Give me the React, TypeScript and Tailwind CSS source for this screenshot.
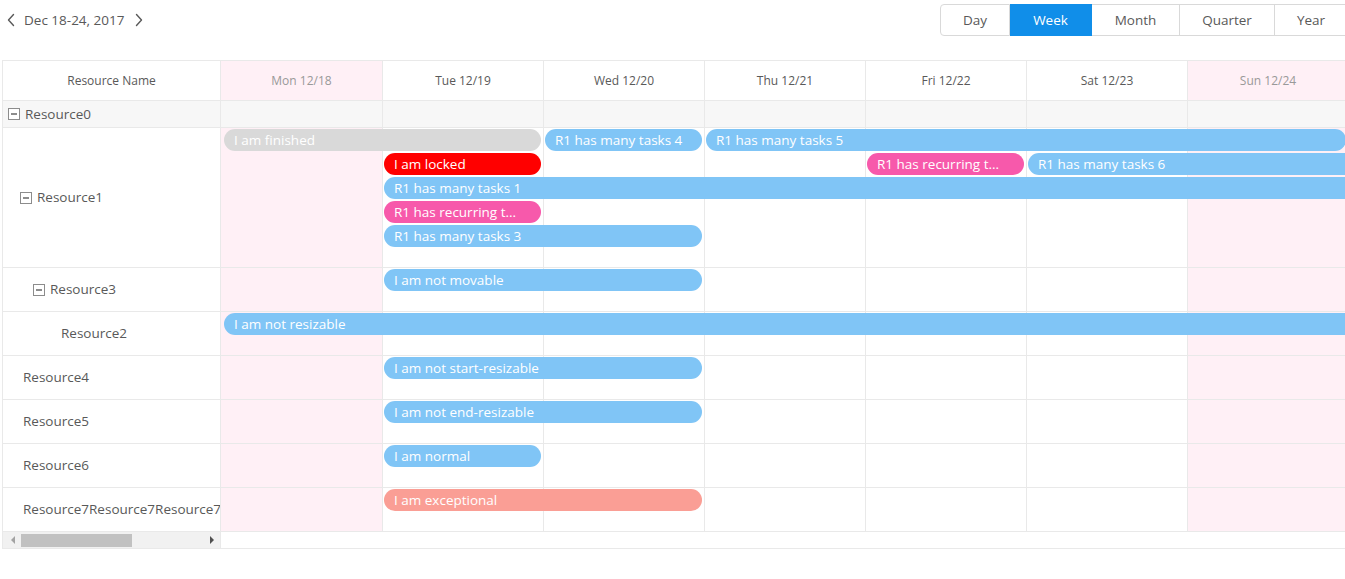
import React from 'react'

/* ── Scheduler data (week of Dec 18, 2017) ── */
const DAYS = [
  { label: 'Mon 12/18', off: true },
  { label: 'Tue 12/19', off: false },
  { label: 'Wed 12/20', off: false },
  { label: 'Thu 12/21', off: false },
  { label: 'Fri 12/22', off: false },
  { label: 'Sat 12/23', off: false },
  { label: 'Sun 12/24', off: true },
]

const VIEWS = [
  { label: 'Day', w: 'w-[70px]' },
  { label: 'Week', w: 'w-[82px]', active: true },
  { label: 'Month', w: 'w-[88px]' },
  { label: 'Quarter', w: 'w-[95px]' },
  { label: 'Year', w: 'w-[73px]' },
]

const COL_START = ['col-start-1', 'col-start-2', 'col-start-3', 'col-start-4', 'col-start-5', 'col-start-6', 'col-start-7']
const COL_END = ['col-end-2', 'col-end-3', 'col-end-4', 'col-end-5', 'col-end-6', 'col-end-7', 'col-end-8']
const ROW_START = ['row-start-2', 'row-start-3', 'row-start-4', 'row-start-5', 'row-start-6']

type Ev = {
  text: string
  lane: number
  start: number
  end: number
  bg: string
  cut?: boolean
}

type Res = {
  name: string
  height: string
  rows: string
  pad: string
  icon?: boolean
  group?: boolean
  events: Ev[]
}

const BLUE = 'bg-[#80c5f6]'

const RESOURCES: Res[] = [
  { name: 'Resource0', height: 'h-[27px]', rows: 'grid-rows-[1fr]', pad: 'pl-[5px]', icon: true, group: true, events: [] },
  {
    name: 'Resource1',
    height: 'h-[140px]',
    rows: 'grid-rows-[1px_repeat(5,24px)_1fr]',
    pad: 'pl-[17px]',
    icon: true,
    events: [
      { text: 'I am finished', lane: 0, start: 0, end: 1, bg: 'bg-[#d9d9d9]' },
      { text: 'R1 has many tasks 4', lane: 0, start: 2, end: 2, bg: BLUE },
      { text: 'R1 has many tasks 5', lane: 0, start: 3, end: 6, bg: BLUE },
      { text: 'I am locked', lane: 1, start: 1, end: 1, bg: 'bg-[#ff0000]' },
      { text: 'R1 has recurring t...', lane: 1, start: 4, end: 4, bg: 'bg-[#f759ab]' },
      { text: 'R1 has many tasks 6', lane: 1, start: 5, end: 6, bg: BLUE, cut: true },
      { text: 'R1 has many tasks 1', lane: 2, start: 1, end: 6, bg: BLUE, cut: true },
      { text: 'R1 has recurring t...', lane: 3, start: 1, end: 1, bg: 'bg-[#f759ab]' },
      { text: 'R1 has many tasks 3', lane: 4, start: 1, end: 2, bg: BLUE },
    ],
  },
  {
    name: 'Resource3',
    height: 'h-[44px]',
    rows: 'grid-rows-[1px_24px_1fr]',
    pad: 'pl-[30px]',
    icon: true,
    events: [{ text: 'I am not movable', lane: 0, start: 1, end: 2, bg: BLUE }],
  },
  {
    name: 'Resource2',
    height: 'h-[44px]',
    rows: 'grid-rows-[1px_24px_1fr]',
    pad: 'pl-[58px]',
    events: [{ text: 'I am not resizable', lane: 0, start: 0, end: 6, bg: BLUE, cut: true }],
  },
  {
    name: 'Resource4',
    height: 'h-[44px]',
    rows: 'grid-rows-[1px_24px_1fr]',
    pad: 'pl-[20px]',
    events: [{ text: 'I am not start-resizable', lane: 0, start: 1, end: 2, bg: BLUE }],
  },
  {
    name: 'Resource5',
    height: 'h-[44px]',
    rows: 'grid-rows-[1px_24px_1fr]',
    pad: 'pl-[20px]',
    events: [{ text: 'I am not end-resizable', lane: 0, start: 1, end: 2, bg: BLUE }],
  },
  {
    name: 'Resource6',
    height: 'h-[44px]',
    rows: 'grid-rows-[1px_24px_1fr]',
    pad: 'pl-[20px]',
    events: [{ text: 'I am normal', lane: 0, start: 1, end: 1, bg: BLUE }],
  },
  {
    name: 'Resource7Resource7Resource7Resource7Resource7',
    height: 'h-[44px]',
    rows: 'grid-rows-[1px_24px_1fr]',
    pad: 'pl-[20px]',
    events: [{ text: 'I am exceptional', lane: 0, start: 1, end: 2, bg: 'bg-[#fa9e95]' }],
  },
]

export default function App() {
  return (
    <div className="w-screen h-screen overflow-hidden bg-white font-['Open_Sans','Noto_Sans',sans-serif] text-[#595959]">
      <div className="w-[1350px] pl-[2px]">

        {/* Toolbar */}
        <header className="flex items-center h-[40px]">
          <button className="ml-[2px] w-[14px] flex items-center justify-center text-[#595959]">
            <ChevronSVG dir="left" />
          </button>
          <span className="ml-[6px] text-[13.5px]">Dec 18-24, 2017</span>
          <button className="ml-[8px] w-[14px] flex items-center justify-center text-[#595959]">
            <ChevronSVG dir="right" />
          </button>

          <div className="ml-auto mr-[2px] flex h-[32px] text-[13.5px]">
            {VIEWS.map((v, i) => (
              <div
                key={v.label}
                className={[
                  'flex items-center justify-center border-y',
                  v.w,
                  i === 0 ? 'border-l rounded-l-[4px]' : '',
                  'border-r',
                  v.active ? 'bg-[#108ee9] border-[#108ee9] text-white' : 'border-[#d9d9d9] text-[#595959]',
                ].join(' ')}
              >
                {v.label}
              </div>
            ))}
          </div>
        </header>

        {/* Scheduler table */}
        <div className="mt-[20px] border-t border-b border-l border-[#e9e9e9] w-[1347px]">

          {/* Column headers */}
          <div className="grid grid-cols-[218px_162px_repeat(6,161px)] h-[40px] border-b border-[#e9e9e9] text-[12px]">
            <div className="flex items-center justify-center pt-[1px] border-r border-[#e9e9e9]">Resource Name</div>
            {DAYS.map((d) => (
              <div
                key={d.label}
                className={`flex items-center justify-center pt-[1px] border-r border-[#e9e9e9] ${d.off ? 'bg-[#fff0f6] text-[#999]' : 'text-[#595959]'}`}
              >
                {d.label}
              </div>
            ))}
          </div>

          {/* Resource rows */}
          {RESOURCES.map((r) => (
            <div key={r.name} className={`grid grid-cols-[218px_1fr] border-b border-[#e9e9e9] ${r.height} ${r.group ? 'bg-[#f7f7f7]' : ''}`}>
              <div className={`flex items-center gap-[5px] overflow-hidden whitespace-nowrap border-r border-[#e9e9e9] text-[13.5px] ${r.pad}`}>
                {r.icon && <CollapseIcon />}
                <span>{r.name}</span>
              </div>

              <div className={`grid grid-cols-[162px_repeat(6,161px)] ${r.rows}`}>
                {DAYS.map((d, i) => (
                  <div
                    key={d.label}
                    className={`row-span-full ${COL_START[i]} border-r border-[#e9e9e9] ${d.off && !r.group ? 'bg-[#fff0f6]' : ''}`}
                  />
                ))}
                {r.events.map((e) => (
                  <div
                    key={e.text + e.lane}
                    className={[
                      COL_START[e.start],
                      COL_END[e.end],
                      ROW_START[e.lane],
                      e.bg,
                      e.start === 0 ? 'ml-[3px]' : 'ml-[1px]',
                      e.cut ? 'rounded-l-full -mr-[20px]' : 'rounded-full mr-[3px]',
                      'h-[22px] leading-[22px] pl-[10px] text-[13.5px] text-white whitespace-nowrap overflow-hidden',
                    ].join(' ')}
                  >
                    {e.text}
                  </div>
                ))}
              </div>
            </div>
          ))}

          {/* Horizontal scrollbar under resource column */}
          <div className="grid grid-cols-[218px_1fr] h-[16px]">
            <div className="flex items-center bg-[#f1f1f1] border-r border-[#e9e9e9]">
              <span className="ml-[8px] w-0 h-0 border-y-[4px] border-y-transparent border-r-[4px] border-r-[#a3a3a3]" />
              <span className="ml-[6px] w-[111px] h-[13px] bg-[#c1c1c1]" />
              <span className="ml-auto mr-[6px] w-0 h-0 border-y-[4px] border-y-transparent border-l-[4px] border-l-[#505050]" />
            </div>
            <div />
          </div>
        </div>
      </div>
    </div>
  )
}

/* ── Tree collapse box ── */
function CollapseIcon() {
  return (
    <span className="flex items-center justify-center w-[12px] h-[12px] border border-[#8c8c8c] bg-white shrink-0">
      <span className="w-[6px] h-[2px] bg-[#8c8c8c]" />
    </span>
  )
}

/* ── Prev / next arrows ── */
function ChevronSVG({ dir }: { dir: 'left' | 'right' }) {
  return (
    <svg width="10" height="14" viewBox="0 0 10 14" fill="none" stroke="currentColor" strokeWidth="1.4" strokeLinecap="round" strokeLinejoin="round">
      {dir === 'left' ? <polyline points="7.5 1.5 2.5 7 7.5 12.5" /> : <polyline points="2.5 1.5 7.5 7 2.5 12.5" />}
    </svg>
  )
}
